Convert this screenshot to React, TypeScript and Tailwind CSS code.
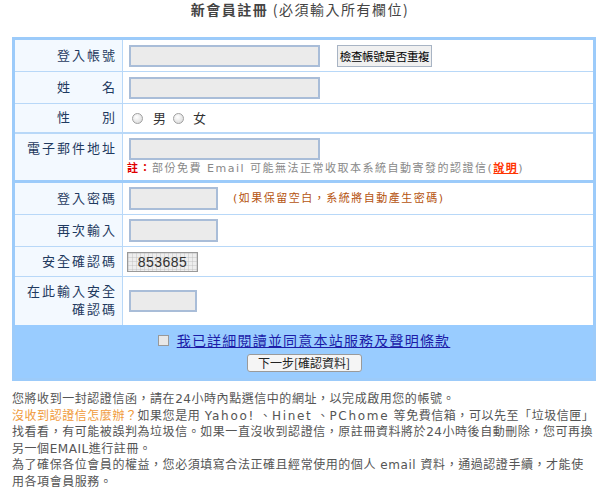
import React from "react";

const labelCls =
  "w-[108px] shrink-0 bg-[#f3f9ff] border-r border-[#b8d8f8] flex items-center justify-end pr-[5px] text-[13px] leading-[18px] tracking-[2px] text-[#1f3a60] text-right";
const inputCls =
  "h-[22px] bg-[#ebebeb] border-2 border-[#a9bdd8] shrink-0";

function Radio() {
  return (
    <span className="inline-block w-[11px] h-[11px] rounded-full border border-[#a0a0a0] bg-[radial-gradient(circle_at_40%_35%,#ffffff,#d4d4d4)] shrink-0" />
  );
}

function Captcha() {
  return (
    <div className="relative w-[71px] h-[20px] border border-[#999] bg-[#eeeeee] overflow-hidden">
      <svg className="absolute inset-0" width="71" height="20">
        <defs>
          <pattern id="g" width="4" height="4" patternUnits="userSpaceOnUse">
            <path d="M4 0 L0 0 0 4" fill="none" stroke="#b9b9b9" strokeWidth="0.8" />
          </pattern>
        </defs>
        <rect width="71" height="20" fill="url(#g)" />
      </svg>
      <span className="absolute inset-0 flex items-center justify-center text-[14px] leading-[18px] text-[#333] font-['Liberation_Sans',sans-serif] tracking-[0.5px]">
        853685
      </span>
    </div>
  );
}

export default function App() {
  return (
    <div className="w-[600px] min-h-[492px] bg-white font-['DejaVu_Sans','Noto_Sans_CJK_TC',sans-serif]">
      <div className="text-center text-[14px] leading-[18px] tracking-[1.5px] text-[#444] font-['Noto_Sans_CJK_TC',sans-serif]">
        <span className="font-bold">新會員註冊</span>
        <span> (必須輸入所有欄位)</span>
      </div>

      <div className="ml-[12px] mt-[19px] w-[584px] border-[3px] border-[#9ccbfa]">
        {/* row 1 */}
        <div className="flex h-[32px] border-b border-[#b8d8f8]">
          <div className={labelCls}>登入帳號</div>
          <div className="flex-1 flex items-center pl-[6px]">
            <div className={`${inputCls} w-[191px]`} />
            <div className="ml-[17px] w-[95px] h-[22px] bg-[#f0f0f0] border border-[#a8b4c4] flex items-center justify-center text-[11.5px] tracking-[-0.3px] whitespace-nowrap text-black font-['Noto_Sans_CJK_TC',sans-serif] leading-[14px]">
              檢查帳號是否重複
            </div>
          </div>
        </div>
        {/* row 2 */}
        <div className="flex h-[32px] border-b border-[#b8d8f8]">
          <div className={labelCls}>姓　　名</div>
          <div className="flex-1 flex items-center pl-[6px]">
            <div className={`${inputCls} w-[191px]`} />
          </div>
        </div>
        {/* row 3 */}
        <div className="flex h-[30px] border-b-2 border-[#b8d8f8]">
          <div className={labelCls}>性　　別</div>
          <div className="flex-1 flex items-center pl-[9px] text-[13px] leading-[16px] text-[#333] font-['Noto_Sans_CJK_TC',sans-serif]">
            <Radio />
            <span className="ml-[10px]">男</span>
            <span className="ml-[7px] flex">
              <Radio />
            </span>
            <span className="ml-[9px]">女</span>
          </div>
        </div>
        {/* row 4 */}
        <div className="flex h-[49px] border-b-[3px] border-[#9ccbfa]">
          <div className={`${labelCls} !items-start pt-[6px]`}>電子郵件地址</div>
          <div className="flex-1 flex flex-col items-start pl-[6px] pt-[4px]">
            <div className={`${inputCls} w-[191px]`} />
            <div className="mt-[2px] ml-[-2px] text-[11px] leading-[14px] tracking-[1.5px] text-[#888] whitespace-nowrap">
              <span className="text-[#e00000] font-bold">註：</span>
              部份免費 Email 可能無法正常收取本系統自動寄發的認證信(
              <span className="text-[#ff3300] font-bold underline">說明</span>)
            </div>
          </div>
        </div>
        {/* row 5 */}
        <div className="flex h-[32px] border-b border-[#b8d8f8]">
          <div className={labelCls}>登入密碼</div>
          <div className="flex-1 flex items-center pl-[6px]">
            <div className={`${inputCls} w-[89px] h-[23px]`} />
            <span className="ml-[15px] text-[11px] leading-[14px] tracking-[1.5px] text-[#b5530f] whitespace-nowrap">
              (如果保留空白，系統將自動產生密碼)
            </span>
          </div>
        </div>
        {/* row 6 */}
        <div className="flex h-[32px] border-b border-[#b8d8f8]">
          <div className={labelCls}>再次輸入</div>
          <div className="flex-1 flex items-center pl-[6px]">
            <div className={`${inputCls} w-[89px] h-[23px]`} />
          </div>
        </div>
        {/* row 7 */}
        <div className="flex h-[30px] border-b border-[#b8d8f8]">
          <div className={labelCls}>安全確認碼</div>
          <div className="flex-1 flex items-center pl-[4px]">
            <Captcha />
          </div>
        </div>
        {/* row 8 */}
        <div className="flex h-[48px]">
          <div className={labelCls}>
            <div>
              在此輸入安全
              <br />
              確認碼
            </div>
          </div>
          <div className="flex-1 flex items-center pl-[6px]">
            <div className={`${inputCls} w-[68px]`} />
          </div>
        </div>
        {/* bottom */}
        <div className="h-[53px] bg-[#99ccff] flex flex-col items-center pt-[7px]">
          <div className="flex items-center">
            <span className="w-[11px] h-[11px] border border-[#999] bg-[#e8e8e8] shrink-0" />
            <span className="ml-[8px] text-[14px] leading-[16px] tracking-[1.2px] text-[#1c1ca8] underline font-['Noto_Sans_CJK_TC',sans-serif]">
              我已詳細閱讀並同意本站服務及聲明條款
            </span>
          </div>
          <div className="mt-[6px] w-[115px] h-[18px] bg-[#f5f5f5] border border-[#9a9a9a] rounded-[3px] flex items-center justify-center text-[12px] leading-[14px] text-[#222] whitespace-nowrap font-['Noto_Sans_CJK_TC',sans-serif]">
            下一步[確認資料]
          </div>
        </div>
      </div>

      <div className="ml-[12px] mt-[10px] text-[12px] leading-[16.6px] tracking-[0.55px] text-[#555] whitespace-nowrap">
        您將收到一封認證信函，請在24小時內點選信中的網址，以完成啟用您的帳號。
        <br />
        <span className="text-[#f09a3a]">沒收到認證信怎麼辦？</span>
        如果您是用 <span className="tracking-[1.7px]">Yahoo!</span> 、<span className="tracking-[1.7px]">Hinet</span> 、<span className="tracking-[1.7px]">PChome</span> 等免費信箱，可以先至「垃圾信匣」
        <br />
        找看看，有可能被誤判為垃圾信。如果一直沒收到認證信，原註冊資料將於24小時後自動刪除，您可再換
        <br />
        另一個EMAIL進行註冊。
        <br />
        為了確保各位會員的權益，您必須填寫合法正確且經常使用的個人 email 資料，通過認證手續，才能使
        <br />
        用各項會員服務。
      </div>
    </div>
  );
}
